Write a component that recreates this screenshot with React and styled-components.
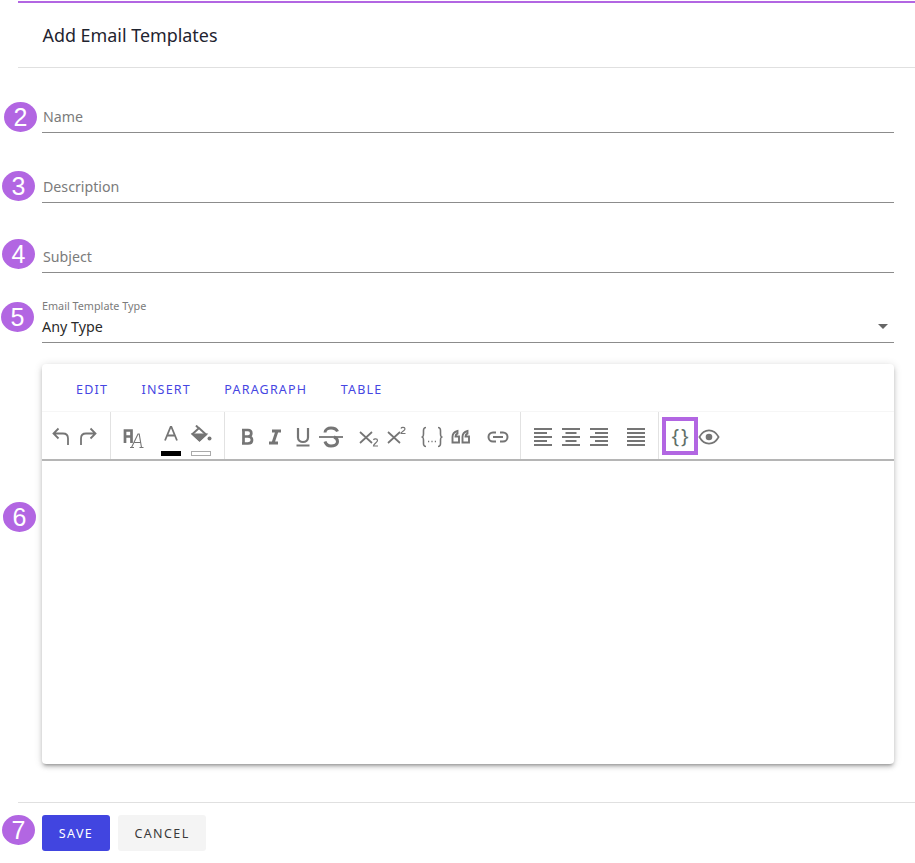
import React from "react";
import styled, { createGlobalStyle } from "styled-components";

const Global = createGlobalStyle`
  html, body { margin: 0; padding: 0; background: #fff; }
  body { font-family: "Noto Sans", "Open Sans", sans-serif; }
  * { box-sizing: border-box; }
`;

const Page = styled.div`
  position: relative;
  width: 915px;
  height: 863px;
  padding: 1px 0 0 18px;
  overflow: hidden;
`;
const Panel = styled.div`
  border-top: 2px solid #b266e2;
`;
const Header = styled.header`
  height: 65px;
  padding: 0 0 1px 24.500px;
  display: flex;
  align-items: center;
  border-bottom: 1px solid #e0e0e0;
  font-size: 17.900px;
  color: #1f2430;
`;
const Form = styled.div`
  padding: 0 21px 0 24px;
  display: flex;
  flex-direction: column;
`;
const Field = styled.div`
  height: 36px;
  margin-top: ${(p) => p.$mt}px;
  border-bottom: 1px solid #8c8c8c;
  display: flex;
  align-items: flex-end;
  padding: 0 0 5px 1px;
`;
const TextInput = styled.input`
  width: 100%;
  border: 0;
  outline: 0;
  padding: 0;
  background: transparent;
  font: inherit;
  font-size: 14.200px;
  line-height: 20px;
  color: #333;
  &::placeholder { color: #7b7b7b; opacity: 1; }
`;
const SelectField = styled.div`
  height: 50px;
  margin-top: 20px;
  border-bottom: 1px solid #8c8c8c;
  position: relative;
  padding-top: 6px;
`;
const SelectLabel = styled.div`
  font-size: 10.800px;
  line-height: 14px;
  color: #7b7b7b;
`;
const SelectValue = styled.div`
  font-size: 14.300px;
  line-height: 20px;
  margin-top: 4px;
  color: #2a2a2a;
`;
const Caret = styled.span`
  position: absolute;
  right: 6px;
  top: 31px;
  width: 0;
  height: 0;
  border-left: 5px solid transparent;
  border-right: 5px solid transparent;
  border-top: 5px solid #666;
`;
const Editor = styled.section`
  margin-top: 21px;
  height: 400px;
  background: #fff;
  border-radius: 4px;
  box-shadow: 0 3px 3px -2px rgba(0,0,0,.25), 0 3px 4px rgba(0,0,0,.16), 0 1px 8px rgba(0,0,0,.14);
`;
const Menubar = styled.nav`
  height: 47px;
  display: flex;
  align-items: center;
  padding: 4px 0 0 34px;
  gap: 33.400px;
`;
const MenuItem = styled.span`
  font-size: 12.500px;
  letter-spacing: 1.200px;
  color: #4646e2;
`;
const Toolbar = styled.div`
  height: 50px;
  display: flex;
  border-top: 1px solid #f6f6f6;
  border-bottom: 2px solid #b5b5b5;
`;
const Group = styled.div`
  width: ${(p) => p.$w}px;
  padding-left: ${(p) => p.$pad}px;
  display: flex;
  align-items: center;
  border-right: ${(p) => (p.$last ? "0" : "1px solid #e2e2e2")};
  flex: ${(p) => (p.$last ? "1" : "none")};
`;
const Tool = styled.span`
  width: ${(p) => p.$w || 28}px;
  margin-left: ${(p) => p.$ml || 0}px;
  margin-top: 2px;
  height: 30px;
  display: flex;
  align-items: center;
  justify-content: center;
  flex: none;
  color: #757575;
  position: relative;
`;
const Highlight = styled.span`
  width: 36px;
  height: 38px;
  border: 4px solid #b266e2;
  display: flex;
  align-items: center;
  justify-content: center;
  color: #5f7069;
  font-size: 20px;
  letter-spacing: 2px;
  padding-left: 2px;
`;
const Swatch = styled.span`
  position: absolute;
  left: 4px;
  bottom: -4px;
  width: 20px;
  height: 5px;
  background: ${(p) => p.$c};
  border: 1px solid ${(p) => (p.$c === "#000" ? "#000" : "#aaa")};
`;
const Footer = styled.footer`
  margin-top: 38px;
  border-top: 1px solid #e0e0e0;
  padding: 12px 0 0 24px;
  display: flex;
  gap: 8px;
`;
const Button = styled.button`
  height: 36px;
  width: ${(p) => p.$w}px;
  border: 0;
  border-radius: 3px;
  padding: 0;
  font: inherit;
  font-size: 12.500px;
  letter-spacing: 1.400px;
  background: ${(p) => (p.$primary ? "#4145e0" : "#f4f4f4")};
  color: ${(p) => (p.$primary ? "#fff" : "#3a3a3a")};
`;
const Marker = styled.span`
  position: absolute;
  left: ${(p) => p.$x}px;
  top: ${(p) => p.$y}px;
  width: 33px;
  height: 30px;
  border-radius: 50%;
  background: #b266e2;
  color: #fff;
  font-family: "Liberation Sans", Arial, sans-serif;
  font-size: 25px;
  line-height: 30px;
  text-align: center;
`;

const Ic = ({ children, w = 22, h = 22, vb = "0 0 22 22", sw = 1.8 }) => (
  <svg width={w} height={h} viewBox={vb} fill="none" stroke="currentColor" strokeWidth={sw}>
    {children}
  </svg>
);

export default function App() {
  return (
    <Page>
      <Global />
      <Panel>
        <Header>Add Email Templates</Header>
        <Form>
          <Field $mt={29}><TextInput placeholder="Name" /></Field>
          <Field $mt={34}><TextInput placeholder="Description" /></Field>
          <Field $mt={34}><TextInput placeholder="Subject" /></Field>
          <SelectField>
            <SelectLabel>Email Template Type</SelectLabel>
            <SelectValue>Any Type</SelectValue>
            <Caret />
          </SelectField>
          <Editor>
            <Menubar>
              <MenuItem>EDIT</MenuItem>
              <MenuItem>INSERT</MenuItem>
              <MenuItem>PARAGRAPH</MenuItem>
              <MenuItem>TABLE</MenuItem>
            </Menubar>
            <Toolbar>
              <Group $w={69} $pad={5}>
                <Tool $w={27}><Ic><path d="M8.500 2.500 3.500 7.500l5 5M4 7.500h9c3 0 5 2 5 5V19" /></Ic></Tool>
                <Tool $w={27}><Ic><path d="M13.500 2.500l5 5-5 5M18 7.500H9c-3 0-5 2-5 5V19" /></Ic></Tool>
              </Group>
              <Group $w={114} $pad={8}>
                <Tool>
                  <Ic w={24} h={24} vb="0 0 24 24">
                    <path d="M4 18V5.500h6.500V18M4 11.500h6.500" strokeWidth="2.700" />
                    <path d="M10.500 22.500 17 9h1.200l2.300 13.500M13.500 17.500H20M9 22.500h4M18.500 22.500h4" strokeWidth="1.100" />
                  </Ic>
                </Tool>
                <Tool $ml={10}>
                  <Ic><path d="M5 15.500 11 1l6 14.500M7 10.500h8" transform="translate(0 -1)" /></Ic>
                  <Swatch $c="#000" />
                </Tool>
                <Tool $ml={2}>
                  <Ic w={24} h={24} vb="0 0 24 24">
                    <path d="M7 .500 10 3.500M3.500 9 10 3l7 6.500-6.500 6z" strokeWidth="2" />
                    <path d="M4 9.500h13l-6.500 6z" fill="currentColor" />
                    <circle cx="20.500" cy="13.500" r="2" fill="currentColor" stroke="none" />
                  </Ic>
                  <Swatch $c="#fff" />
                </Tool>
              </Group>
              <Group $w={296} $pad={8}>
                <Tool>
                  <Ic><path d="M6 4h6c2.300 0 3.300 1.200 3.300 3.200S14 10.500 12 10.500H7M12 10.500c2.500 0 4 1 4 3.500S14.500 17.500 12 17.500H6M7.500 4v13.500" strokeWidth="2.700" /></Ic>
                </Tool>
                <Tool>
                  <Ic><path d="M8 5h9M5 17h9M13 5 9 17" strokeWidth="3" /></Ic>
                </Tool>
                <Tool>
                  <Ic><path d="M6 2v9.500c0 6 10 6 10 0V2M4.500 19.500h13" strokeWidth="2.200" /></Ic>
                </Tool>
                <Tool>
                  <Ic w={24} h={24} vb="0 0 24 24">
                    <path d="M18.500 6.500C17.500 4 15 3 12 3S6 4.500 6 7.500M6 16.500C7 20 9.500 21 12 21s6.500-1 6.500-4.500c0-2.500-2-4-3.500-4.500" strokeWidth="3" />
                    <path d="M0 12h24" strokeWidth="1.800" />
                  </Ic>
                </Tool>
                <Tool $ml={9}>
                  <Ic><path d="M3 6l12 11M15 6 3 17" strokeWidth="1.700" /><path d="M16.500 14c.5-1.500 4-1.500 4 .5 0 2-4 3-4 5.500h4.500" strokeWidth="1.200" /></Ic>
                </Tool>
                <Tool $ml={1}>
                  <Ic><path d="M2 6l12 11M14 6 2 17" strokeWidth="1.700" /><path d="M15 2.500c.5-1.500 4-1.500 4 .5 0 2-4 2.500-4 4.500h4.500" strokeWidth="1.200" /></Ic>
                </Tool>
                <Tool $ml={7}>
                  <Ic w={26} vb="0 0 26 22">
                    <path d="M7 1.500C4 1.500 4.500 4.500 4.500 7.500s-.5 3.500-2 3.500c1.500 0 2 .5 2 3.500s-.5 6 2.500 6M19 1.500c3 0 2.500 3 2.500 6s.5 3.500 2 3.500c-1.500 0-2 .5-2 3.500s.5 6-2.500 6" strokeWidth="1.600" />
                    <path d="M9 15.500h1.200M12.400 15.500h1.200M15.800 15.500h1.200" strokeWidth="1.400" />
                  </Ic>
                </Tool>
                <Tool $ml={1}>
                  <Ic>
                    <path d="M2.500 16.500V11c0-3 1-5 5-6v2.500c-1.500.5-2 1-2 3h3.500v6zM12.500 16.500V11c0-3 1-5 5-6v2.500c-1.500.5-2 1-2 3h3.500v6z" strokeWidth="1.900" />
                  </Ic>
                </Tool>
                <Tool $ml={9}>
                  <Ic w={24} vb="0 0 24 22">
                    <path d="M10 6.500H7a4.500 4.500 0 0 0 0 9h3M14 6.500h3a4.500 4.500 0 0 1 0 9h-3M7 11h10" strokeWidth="2" />
                  </Ic>
                </Tool>
              </Group>
              <Group $w={138} $pad={8}>
                <Tool>
                  <Ic><path d="M2 3h18M2 7h13M2 11h18M2 15h13M2 19h18" strokeWidth="2" /></Ic>
                </Tool>
                <Tool>
                  <Ic><path d="M2 3h18M5.500 7h11M2 11h18M5.500 15h11M2 19h18" strokeWidth="2" /></Ic>
                </Tool>
                <Tool>
                  <Ic><path d="M2 3h18M7 7h13M2 11h18M7 15h13M2 19h18" strokeWidth="2" /></Ic>
                </Tool>
                <Tool $ml={9}>
                  <Ic><path d="M2 3h18M2 7h18M2 11h18M2 15h18M2 19h18" strokeWidth="2" /></Ic>
                </Tool>
              </Group>
              <Group $last $pad={3}>
                <Highlight>{"{}"}</Highlight>
                <Tool $w={22}>
                  <Ic w={22} vb="0 0 24 22">
                    <path d="M1.500 11C4 6.500 8 3.800 12 3.800s8 2.700 10.500 7.200C20 15.500 16 18.200 12 18.200S4 15.500 1.500 11z" strokeWidth="1.800" />
                    <circle cx="12" cy="11" r="3.600" fill="currentColor" stroke="none" />
                  </Ic>
                </Tool>
              </Group>
            </Toolbar>
          </Editor>
        </Form>
        <Footer>
          <Button $primary $w={68}>SAVE</Button>
          <Button $w={88}>CANCEL</Button>
        </Footer>
      </Panel>
      <Marker $x={4} $y={102}>2</Marker>
      <Marker $x={2} $y={171}>3</Marker>
      <Marker $x={2} $y={239}>4</Marker>
      <Marker $x={1} $y={302}>5</Marker>
      <Marker $x={3} $y={502}>6</Marker>
      <Marker $x={2} $y={815}>7</Marker>
    </Page>
  );
}
